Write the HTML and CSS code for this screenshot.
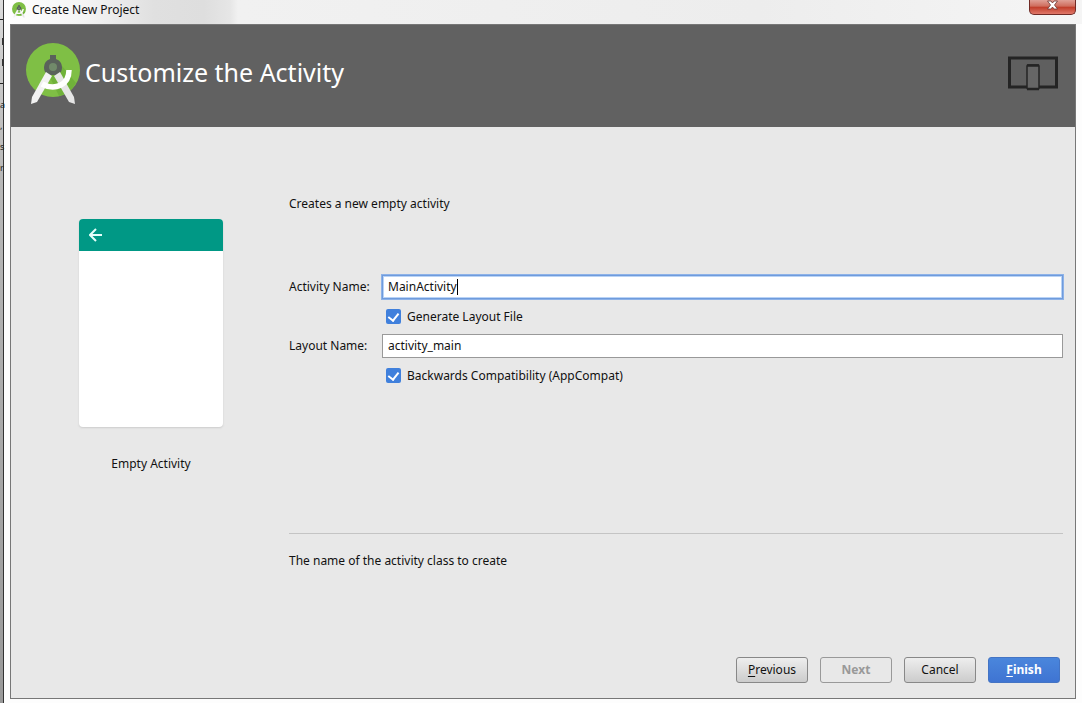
FILE: index.html
```html
<!DOCTYPE html>
<html lang="en">
<head>
<meta charset="utf-8">
<title>Create New Project</title>
<link rel="stylesheet" href="styles.css">
</head>
<body>
<svg class="defs" width="0" height="0" aria-hidden="true">
  <symbol id="studio" viewBox="0 0 54 62">
    <circle cx="27" cy="27" r="27" fill="#7fbf45"/>
    <path d="M32 18l18 22a27 27 0 0 1-17 13L19 24z" fill="#70b23a"/>
    <path d="M24 12h6v4a9 9 0 0 1 6 8c0 4-1 5-4 8H22c-3-3-4-4-4-8a9 9 0 0 1 6-8z" fill="#5a625b"/>
    <circle cx="27" cy="24" r="4" fill="#718a6a"/>
    <path d="M20 29l6 4-15 26-6 2 1-7z" fill="#f2f2f2"/>
    <path d="M34 29l-6 4 15 26 6 2-1-7z" fill="#e6e6e6"/>
    <path d="M16 41c13 7 27 1 27-14" fill="none" stroke="#fff" stroke-width="5.5"/>
  </symbol>
</svg>
<div class="desktop">
  <div class="behind" aria-hidden="true"><i></i><b></b><b></b><i></i><span>a</span><span>,</span><span>s</span><span>r</span></div>
  <main class="window">
    <div class="titlebar">
      <svg class="title-icon" aria-hidden="true"><use href="#studio"/></svg>
      <span class="title">Create New Project</span>
      <button class="close" aria-label="Close"><svg viewBox="0 0 12 10" aria-hidden="true"><path d="M1 1h3.500l1.500 2 1.500-2H11L8 5l3 4H7.500L6 7 4.500 9H1l3-4z" fill="#fff" stroke="#6b3430" stroke-width=".8"/></svg></button>
    </div>
    <div class="dialog">
      <header class="banner">
        <svg class="logo" aria-hidden="true"><use href="#studio"/></svg>
        <h1>Customize the Activity</h1>
        <svg class="devices" viewBox="0 0 50 36" aria-hidden="true">
          <rect x="1.500" y="2" width="47" height="29" fill="#5f5f5f" stroke="#242424" stroke-width="3"/>
          <rect x="19" y="9" width="12" height="24" rx="1" fill="#666" stroke="#242424" stroke-width="1.500"/>
          <path d="M19 9.500h12M19 33h12" stroke="#242424" stroke-width="2.500"/>
        </svg>
      </header>
      <div class="content">
        <figure class="preview">
          <div class="phone"><div class="appbar"><svg viewBox="0 0 14 14" aria-hidden="true"><path d="M13 7H1M7 1L1 7l6 6" fill="none" stroke="#e5fffb" stroke-width="2"/></svg></div></div>
          <figcaption>Empty Activity</figcaption>
        </figure>
        <form class="form" id="activity">
          <p class="intro">Creates a new empty activity</p>
          <div class="fields">
            <label for="name">Activity Name:</label>
            <div class="field focused"><input type="text" id="name" value="MainActivity"><span class="caret"></span></div>
            <label class="check"><input type="checkbox" checked><span>Generate Layout File</span></label>
            <label for="layout">Layout Name:</label>
            <div class="field"><input type="text" id="layout" value="activity_main"></div>
            <label class="check"><input type="checkbox" checked><span>Backwards Compatibility (AppCompat)</span></label>
          </div>
          <p class="hint">The name of the activity class to create</p>
        </form>
      </div>
      <footer class="actions">
        <button type="button"><u>P</u>revious</button>
        <button type="button" disabled>Next</button>
        <button type="button">Cancel</button>
        <button class="primary" form="activity"><u>F</u>inish</button>
      </footer>
    </div>
  </main>
</div>
</body>
</html>
```
FILE: styles.css
```css
* { box-sizing: border-box; }
body { margin: 0; font: 12px/18px "Noto Sans", "Open Sans", sans-serif; color: #111; }
button, input { font: inherit; color: inherit; }
h1, p, figure { margin: 0; }
.defs { position: absolute; }
.desktop { display: flex; height: 100vh; overflow: hidden; background: #fdfdfd; }
.behind {
  width: 4px; flex: none; padding-top: 19px;
  display: flex; flex-direction: column;
  background: linear-gradient(#ddd, #ccc 60px, #b8b8b8 180px, #999);
  border-right: 1px solid #333;
}
.behind i { height: 1px; background: #222; }
.behind b { width: 1px; height: 7px; margin: 18px 0 0 2px; background: #333; }
.behind b + b { margin: 14px 0 17px 2px; }
.behind span { height: 21px; font-size: 9px; line-height: 21px; color: #222; }
.behind i + span { margin-top: 10px; }
.window { flex: 1; min-width: 0; display: flex; flex-direction: column; padding: 0 6px 4px; }
.titlebar {
  display: flex; align-items: flex-start; height: 24px; margin: 0 -6px; padding: 0 6px 0 8px;
  background: linear-gradient(90deg, #fff, #f4f4f4 80px, #e0e0e0 150px, #dedede 200px, #e6e6e6 226px, #f1f1f1 234px, #ededed 70%, #f5f5f5);
}
.title-icon { width: 14px; height: 16px; margin-top: 2px; }
.title { margin-left: 6px; line-height: 19px; }
.close {
  margin-left: auto; width: 47px; height: 15px; padding: 0; display: flex; justify-content: center;
  border: 1px solid #702a25; border-top: 0; border-radius: 0 0 5px 5px;
  background: linear-gradient(#e0a096, #cf6c5c 45%, #c03c28 50%, #e0786a);
}
.close svg { width: 13px; height: 10px; }
.dialog { flex: 1; display: flex; flex-direction: column; border: 1px solid #777; background: #e8e8e8; }
.banner { display: flex; align-items: center; height: 102px; padding: 0 17px 4px 15px; background: #616161; }
.logo { width: 54px; height: 62px; }
.banner h1 { margin-left: 5px; padding-bottom: 4px; font-size: 25px; line-height: 36px; font-weight: 400; color: #fff; }
.devices { width: 50px; height: 36px; margin-left: auto; }
.content { flex: 1; display: flex; padding: 0 12px 0 68px; }
.preview { width: 144px; margin-top: 92px; text-align: center; }
.phone { height: 208px; border-radius: 4px; overflow: hidden; background: #fff; box-shadow: 0 1px 2px #ccc; }
.appbar { height: 32px; display: flex; align-items: center; padding-left: 10px; background: #009885; }
.appbar svg { width: 14px; height: 14px; }
.preview figcaption { margin-top: 28px; }
.form { flex: 1; margin-left: 66px; padding-top: 68px; }
.fields {
  display: grid; grid-template-columns: 93px 1fr; align-items: center;
  grid-template-rows: 24px 35px 24px 35px; margin-top: 62px;
}
.field { position: relative; }
.field input { display: block; width: 100%; height: 24px; padding: 0 5px 2px; border: 1px solid #999; border-radius: 0; background: #fff; outline: 0; }
.focused input { border-color: #6f9bdc; box-shadow: 0 0 0 1px #8db2e8, inset 0 0 0 1px #b9d3f6; }
.caret { position: absolute; left: 75px; top: 4px; width: 1px; height: 16px; background: #000; }
.check { grid-column: 2; display: flex; align-items: center; gap: 6px; padding-left: 4px; }
.check input {
  appearance: none; width: 15px; height: 15px; margin: 0; border-radius: 2px; background: #4080dc;
  display: grid; place-items: center;
}
.check input:checked::before {
  content: ""; width: 5px; height: 8px; margin-bottom: 2px;
  border: solid #fff; border-width: 0 2px 2px 0; transform: rotate(38deg);
}
.hint { margin-top: 140px; padding-top: 18px; border-top: 1px solid #c4c4c4; }
.actions { display: flex; justify-content: flex-end; gap: 12px; padding: 0 15px 15px; }
.actions button {
  width: 72px; height: 26px; padding: 0; border: 1px solid #888; border-radius: 3px;
  background: linear-gradient(#eee, #ccc);
}
.actions u { text-underline-offset: 2px; }
.actions button:disabled { background: #e8e8e8; color: #999; font-weight: 700; border-color: #999; }
.actions .primary { background: linear-gradient(#4a86dc, #3f74d2); border-color: #4474c4; color: #fff; font-weight: 700; }
```
